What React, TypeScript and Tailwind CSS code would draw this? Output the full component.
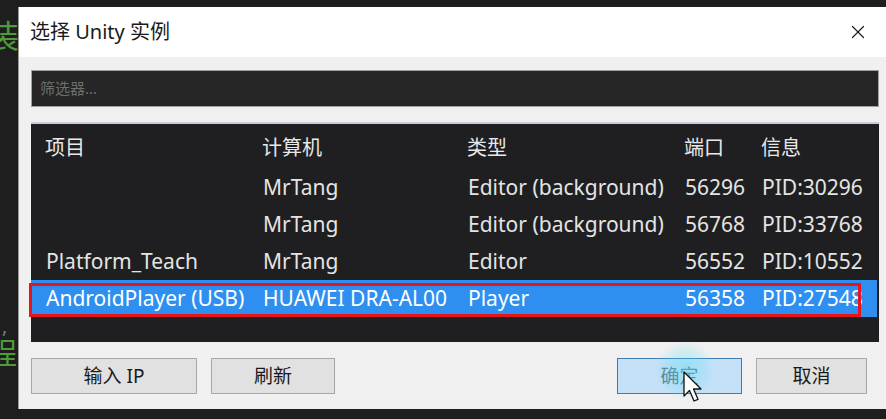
import { X } from 'lucide-react';

type Instance = {
  project: string;
  machine: string;
  kind: string;
  port: string;
  info: string;
  selected?: boolean;
};

const INSTANCES: Instance[] = [
  { project: '', machine: 'MrTang', kind: 'Editor (background)', port: '56296', info: 'PID:30296' },
  { project: '', machine: 'MrTang', kind: 'Editor (background)', port: '56768', info: 'PID:33768' },
  { project: 'Platform_Teach', machine: 'MrTang', kind: 'Editor', port: '56552', info: 'PID:10552' },
  {
    project: 'AndroidPlayer (USB)',
    machine: 'HUAWEI DRA-AL00',
    kind: 'Player',
    port: '56358',
    info: 'PID:27548',
    selected: true,
  },
];

const FONT = "font-['Noto_Sans','Noto_Sans_CJK_SC',sans-serif]";

function Cells({ cells }: { cells: string[] }) {
  return (
    <>
      <div className="w-[217px] shrink-0 whitespace-nowrap">{cells[0]}</div>
      <div className="w-[205px] shrink-0 whitespace-nowrap">{cells[1]}</div>
      <div className="w-[217px] shrink-0 whitespace-nowrap">{cells[2]}</div>
      <div className="w-[77px] shrink-0 whitespace-nowrap">{cells[3]}</div>
      <div className="min-w-0 flex-1 overflow-hidden whitespace-nowrap">{cells[4]}</div>
    </>
  );
}

function DialogButton({ label, primary }: { label: string; primary?: boolean }) {
  return (
    <button
      type="button"
      className={
        primary
          ? 'flex h-[36px] w-full items-center justify-center border border-[#3b7db5] bg-[#c4e1f8] text-[19px] text-[#5f7a8e]'
          : 'flex h-[36px] w-full items-center justify-center border border-[#a8a8a8] bg-[#e1e1e1] text-[19px] text-[#1a1a1a]'
      }
    >
      {label}
    </button>
  );
}

export default function App() {
  return (
    <div className={`relative flex h-[419px] w-[886px] overflow-hidden bg-[#1e1e1e] ${FONT}`}>
      {/* editor text peeking out behind the dialog */}
      <div className="flex w-[18px] shrink-0 flex-col items-start overflow-hidden pt-[20px] leading-none text-[#4e9a3c]">
        <span className="-ml-[13px] text-[32px]">装</span>
        <span className="ml-[2px] mt-[264px] text-[20px] text-[#6a8a66]">,</span>
        <span className="-ml-[13px] mt-[2px] text-[30px]">程</span>
      </div>

      <div className="mt-[7px] flex h-[402px] w-[868px] shrink-0 flex-col border-l border-[#9a9a9a] bg-white">
        <div className="flex h-[50px] shrink-0 items-center justify-between pl-[11px] pr-[17px]">
          <span className="text-[20px] text-[#1a1a1a]">选择 Unity 实例</span>
          <X className="h-[22px] w-[22px] text-[#222]" strokeWidth={1.3} />
        </div>

        <div className="flex flex-1 flex-col bg-[#f0f0f0] pl-[12px] pr-[7px] pt-[13px]">
          <div className="flex h-[37px] items-center border border-[#a0a0a0] bg-[#262626] px-[8px] text-[15px] text-[#6e6e6e]">
            筛选器...
          </div>

          <div className="mt-[15px] h-[220px] border-t-2 border-[#c7cde0] bg-[#1f1f21] pr-[2px] pt-[6px] text-[21px] text-[#e4e4e4]">
            <div className="flex h-[36px] items-center pl-[14px] text-[20px] text-[#e8e8e8]">
              <Cells cells={['项目', '计算机', '类型', '端口', '信息']} />
            </div>
            <div className="mt-[3px] flex flex-col">
              {INSTANCES.map((row) => (
                <div
                  key={row.info}
                  className={
                    row.selected
                      ? 'relative flex h-[37px] items-center bg-[#2e8ff0] pl-[15px] text-white'
                      : 'flex h-[37px] items-center pl-[15px]'
                  }
                >
                  <Cells cells={[row.project, row.machine, row.kind, row.port, row.info]} />
                  {row.selected && (
                    <div className="pointer-events-none absolute -left-[2px] top-[3px] h-[34px] w-[832px] border-[3px] border-[#e8141c]" />
                  )}
                </div>
              ))}
            </div>
          </div>

          <div className="mt-[16px] flex items-center">
            <div className="w-[166px]">
              <DialogButton label="输入 IP" />
            </div>
            <div className="ml-[14px] w-[124px]">
              <DialogButton label="刷新" />
            </div>
            <div className="ml-auto w-[125px]">
              <DialogButton label="确定" primary />
            </div>
            <div className="ml-[14px] mr-[12px] w-[111px]">
              <DialogButton label="取消" />
            </div>
          </div>
        </div>
      </div>

      <div className="pointer-events-none absolute left-[655px] top-[340px] h-[60px] w-[60px] rounded-full bg-[radial-gradient(circle,rgba(90,220,240,0.45)_0%,rgba(90,220,240,0.2)_45%,rgba(90,220,240,0)_70%)]" />
      <svg
        className="pointer-events-none absolute left-[683px] top-[371px]"
        width="22"
        height="34"
        viewBox="0 0 22 34"
      >
        <path
          d="M1 1 L1 25 L6.5 19.5 L11 30 L15 28.3 L10.5 18 L18 18 Z"
          fill="#ffffff"
          stroke="#111111"
          strokeWidth="1.3"
          strokeLinejoin="round"
        />
      </svg>
    </div>
  );
}
